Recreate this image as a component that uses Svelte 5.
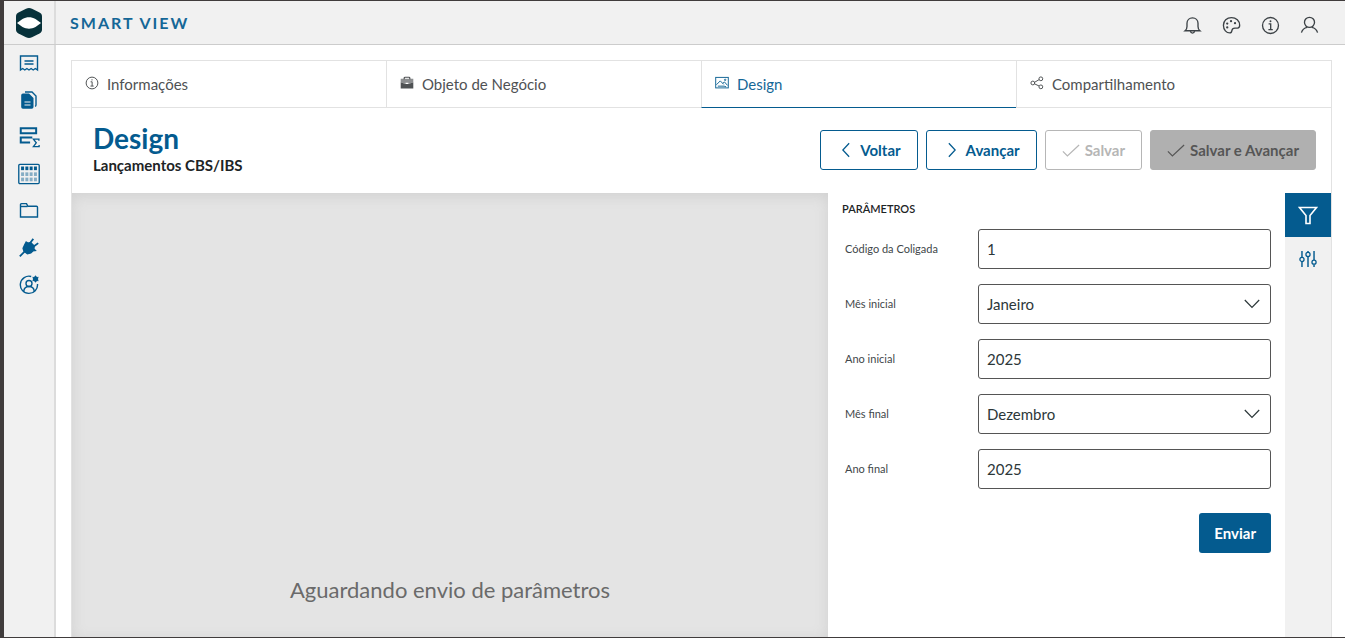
<script>
  const tabs = [
    { id: "info", label: "Informações" },
    { id: "object", label: "Objeto de Negócio" },
    { id: "design", label: "Design" },
    { id: "share", label: "Compartilhamento" },
  ];
  const menu = [
    { id: "report", label: "Relatórios" },
    { id: "files", label: "Documentos" },
    { id: "totals", label: "Totalizadores" },
    { id: "table", label: "Tabelas" },
    { id: "folder", label: "Pastas" },
    { id: "plug", label: "Conexões" },
    { id: "admin", label: "Administração" },
  ];
  const tools = [
    { id: "bell", label: "Notificações" },
    { id: "palette", label: "Tema" },
    { id: "about", label: "Sobre" },
    { id: "user", label: "Perfil" },
  ];
  const months = [
    "Janeiro", "Fevereiro", "Março", "Abril", "Maio", "Junho",
    "Julho", "Agosto", "Setembro", "Outubro", "Novembro", "Dezembro",
  ];

  let activeTab = $state("design");
  let panel = $state("filter");
  let params = $state([
    { id: "coligada", label: "Código da Coligada", value: "1" },
    { id: "mes-ini", label: "Mês inicial", value: "Janeiro", options: months },
    { id: "ano-ini", label: "Ano inicial", value: "2025" },
    { id: "mes-fim", label: "Mês final", value: "Dezembro", options: months },
    { id: "ano-fim", label: "Ano final", value: "2025" },
  ]);
</script>

{#snippet icon(name, size)}
  <svg width={size} height={size} viewBox="0 0 20 20" fill="none" stroke="currentColor" stroke-width="1.4" aria-hidden="true">
    {#if name === "report"}
      <path d="M1.5 3h17v14l-2.2-1.5-2.1 1.5-2.1-1.5-2.1 1.5-2.1-1.5-2.1 1.5-2.1-1.5-2.2 1.5z" />
      <path d="M5.5 8h9M5.5 11h9" />
    {:else if name === "files"}
      <path d="M6 2h7l4 4v9c0 .8-.4 1.2-1 1.4" />
      <path d="M4 3.5h6L14.5 8v9a1.8 1.8 0 0 1-1.8 1.8H4A1.8 1.8 0 0 1 2.2 17V5.3A1.8 1.8 0 0 1 4 3.5z" fill="currentColor" stroke="none" />
      <path d="M5.5 12h6M5.5 15h6" stroke="#f1f1f1" stroke-width="1.2" />
    {:else if name === "totals"}
      <path d="M2.5 2h14v4.5h-14z" stroke-width="1.8" />
      <path d="M13 10.5H2.5V15H11" stroke-width="1.8" />
      <path d="M19 13.5V12h-5l2.6 3.3L14 18.7h5.2v-1.5" stroke-width="1.2" />
    {:else if name === "table"}
      <rect x=".7" y="1.2" width="18.6" height="17.6" rx="1" stroke-width="1.2" />
      <g fill="currentColor" stroke="none">
        {#each [3.2, 8.5, 13.3] as y}
          {#each [2.8, 6.7, 10.6, 14.5] as x}
            <rect {x} {y} width="2.7" height="3.3" opacity={y < 5 ? 1 : 0.45} />
          {/each}
        {/each}
      </g>
    {:else if name === "folder"}
      <path d="M1.5 16V3.7c0-.7.4-1.1 1-1.100h5l1.4 2.7h8.600c.6 0 1 .4 1 1V16z" />
      <path d="M1.5 5.500h7" />
    {:else if name === "plug"}
      <path d="M7.2 4l1.7 1.100 2.700-.6 3.600 3.600-.3 2.800 1.500 1.600-2.600.4-2 2-3.400.9-3.400-2.600-.9-2.900 1.600-3.600z" fill="currentColor" />
      <path d="M.8 18.300l5-5M11.500 4.500l2.800-3.600M15 8.300l4.200-3.200" stroke-width="1.800" />
    {:else if name === "admin"}
      <path d="M12.200 1.500A8.600 8.600 0 1 0 18.500 9" />
      <circle cx="10" cy="8.500" r="3" />
      <path d="M4.700 16.400c.3-3 2.300-4.900 5.300-4.900s5 1.900 5.300 4.900" />
      <circle cx="16.500" cy="4" r="1.700" stroke-width="2" />
      <path d="M16.500.6v6.800M13.500 2.300l6 3.400M19.500 2.300l-6 3.400" stroke-width="1" />
    {:else if name === "bell"}
      <path d="M2.200 15.500h15.600c-1.500-1.200-2-2.600-2-4.500V7.700C15.800 4.300 13.300 2 10 2S4.200 4.300 4.200 7.700V11c0 1.900-.5 3.300-2 4.500z" />
      <path d="M7.800 16c.2 1.300 1 2 2.200 2s2-.7 2.200-2" />
    {:else if name === "palette"}
      <path d="M10 1.700c-5 0-8.500 3.500-8.500 8.100 0 4.800 3.200 8 6.700 8 1.600 0 2-1 2.200-2.400.2-1.800 1.300-2.700 3.200-2.700h2.700c1.500 0 2.300-1 2.300-2.900 0-4.600-3.700-8.100-8.600-8.100z" />
      <g fill="currentColor" stroke="none"><circle cx="5.500" cy="12" r="1.200" /><circle cx="5.500" cy="8" r="1.200" /><circle cx="9.500" cy="5.500" r="1.200" /><circle cx="13.700" cy="7.500" r="1.200" /></g>
    {:else if name === "about" || name === "info"}
      <circle cx="10" cy="10" r="8.400" />
      <path d="M8 8.300h2.200v6M7.800 14.400h4.600" />
      <circle cx="10" cy="5.500" r="1" fill="currentColor" stroke="none" />
    {:else if name === "user"}
      <circle cx="10" cy="6.700" r="5.300" />
      <path d="M1.500 17.500c1-3.200 3-5 6-5.600M18.500 17.500c-1-3.200-3-5-6-5.600" />
    {:else if name === "object"}
      <path d="M6 4.500V3c0-.8.500-1.200 1.200-1.200h5.600c.7 0 1.200.4 1.200 1.200v1.500" stroke-width="1.700" />
      <path d="M1 4h18v5l-7 2.500v-2H8v2L1 9z" fill="currentColor" stroke="none" opacity=".65" />
      <path d="M1 9l7 2.500h4L19 9v9H1z" fill="currentColor" stroke="none" />
    {:else if name === "design"}
      <rect x="1" y="2" width="18" height="15" />
      <path d="M2 12.500L7.500 7l5 5M11 10.500l2.500-2 4.500 5M4 14.500h9l3 1" />
      <circle cx="14.500" cy="5.500" r="1" />
    {:else if name === "share"}
      <circle cx="4" cy="10" r="2.700" /><circle cx="15.500" cy="4" r="2.700" /><circle cx="15.500" cy="15.500" r="2.700" />
      <path d="M6.500 9l6.500-3.800M6.500 11.200l6.500 3.100" />
    {:else if name === "left"}
      <path d="M13.500 2.500L6.500 10l7 7.500" />
    {:else if name === "right"}
      <path d="M6.500 2.500l7 7.500-7 7.500" />
    {:else if name === "check"}
      <path d="M1 11.500l5 5L19 4.500" />
    {:else if name === "filter"}
      <path d="M1.500 2.500h17L12 10.500v8H8v-8z" stroke-width="1.600" />
    {:else if name === "sliders"}
      <path d="M3.300 1v7M3.300 13v6M10 1v1.500M10 7.500V19M16.700 1v10M16.700 16v3" stroke-width="1.600" />
      <circle cx="3.300" cy="10.500" r="2.300" /><circle cx="10" cy="5" r="2.300" /><circle cx="16.700" cy="13.500" r="2.300" />
    {/if}
  </svg>
{/snippet}

<div class="app">
  <header class="topbar">
    <a class="logo" href="#home" aria-label="Início">
      <svg width="26" height="30" viewBox="0 0 26 30" aria-hidden="true">
        <path d="M13 0c1 0 2 .3 3 .8l7.500 3.800C25.200 5.500 26 6.700 26 8.500v13c0 1.800-.8 3-2.500 3.900L16 29.200c-2 1-4 1-6 0l-7.500-3.800C.8 24.500 0 23.300 0 21.500v-13c0-1.800.8-3 2.500-3.900L10 .8c1-.5 2-.8 3-.8z" fill="#07313a" />
        <path d="M1 15c2-1.300 3.500-2.700 5.500-4 4.300-2.300 8.700-2.300 13 0 2 1.300 3.500 2.700 5.500 4-2 1.300-3.500 2.700-5.500 4-4.300 2.300-8.700 2.300-13 0-2-1.300-3.500-2.700-5.500-4z" fill="#fff" />
      </svg>
    </a>
    <span class="brand">SMART VIEW</span>
    <div class="tools">
      {#each tools as t (t.id)}
        <button aria-label={t.label}>{@render icon(t.id, 19)}</button>
      {/each}
    </div>
  </header>

  <div class="body">
    <nav class="sidebar">
      {#each menu as m (m.id)}
        <a href="#{m.id}" aria-label={m.label}>{@render icon(m.id, m.id === "table" || m.id === "totals" ? 22 : 20)}</a>
      {/each}
    </nav>

    <main>
      <div class="tabs" role="tablist">
        {#each tabs as t (t.id)}
          <button class="tab" class:active={activeTab === t.id} role="tab" aria-selected={activeTab === t.id}
            onclick={() => (activeTab = t.id)}>
            {@render icon(t.id, 14)}<span>{t.label}</span>
          </button>
        {/each}
      </div>

      <div class="head">
        <div class="titles">
          <h1>Design</h1>
          <p>Lançamentos CBS/IBS</p>
        </div>
        <div class="actions">
          <button class="btn">{@render icon("left", 18)}Voltar</button>
          <button class="btn">{@render icon("right", 18)}Avançar</button>
          <button class="btn" disabled>{@render icon("check", 18)}Salvar</button>
          <button class="btn solid" disabled>{@render icon("check", 18)}Salvar e Avançar</button>
        </div>
      </div>

      <div class="workspace">
        <section class="viewer">Aguardando envio de parâmetros</section>

        <form class="params" onsubmit={(e) => e.preventDefault()}>
          <h2>PARÂMETROS</h2>
          {#each params as p (p.id)}
            <div class="field">
              <label for={p.id}>{p.label}</label>
              {#if p.options}
                <div class="select">
                  <select id={p.id} bind:value={p.value}>
                    {#each p.options as o (o)}<option>{o}</option>{/each}
                  </select>
                  <svg width="16" height="10" viewBox="0 0 16 10" fill="none" stroke="currentColor" stroke-width="1.2" aria-hidden="true">
                    <path d="M.8 1L8 8.500 15.200 1" />
                  </svg>
                </div>
              {:else}
                <input id={p.id} type="text" bind:value={p.value} />
              {/if}
            </div>
          {/each}
          <button class="send">Enviar</button>
        </form>

        <div class="rail">
          <button class:on={panel === "filter"} aria-label="Parâmetros" onclick={() => (panel = "filter")}>{@render icon("filter", 20)}</button>
          <button class:on={panel === "sliders"} aria-label="Configurações" onclick={() => (panel = "sliders")}>{@render icon("sliders", 18)}</button>
        </div>
      </div>
    </main>
  </div>
</div>

<style>
  :global(body) { margin: 0; background: #fff; }
  .app {
    --blue: #045b8f;
    --line: #e2e2e2;
    --bar: #f1f1f1;
    box-sizing: border-box; height: 100vh; overflow: hidden;
    display: flex; flex-direction: column;
    border: solid #403c3c; border-width: 1px 0 1px 4px;
    font: 15px/24px Lato, sans-serif; color: #2c3739;
  }
  .app * { box-sizing: border-box; }
  button, input, select { font: inherit; color: inherit; margin: 0; }
  button { background: none; border: 0; padding: 0; cursor: pointer; }
  svg { display: block; flex: none; }

  .topbar {
    display: flex; flex: none; height: 44px;
    background: var(--bar); border-bottom: 1px solid #ccc;
  }
  .logo {
    width: 52px; display: grid; place-items: center;
    border-right: 2px solid #dcdcdc;
  }
  .brand {
    padding: 10px 14px; font-size: 16px; font-weight: 700; letter-spacing: 2px; color: #156797;
  }
  .tools { display: flex; align-items: center; gap: 20px; margin-left: auto; padding: 6px 26px 0 0; color: #3c4246; }

  .body { flex: 1; display: flex; min-height: 0; }
  .sidebar {
    flex: none; width: 52px;
    display: flex; flex-direction: column; gap: 1px;
    background: var(--bar); border-right: 2px solid #dcdcdc;
  }
  .sidebar a { height: 36px; display: grid; place-items: center; color: var(--blue); }

  main {
    flex: 1; min-width: 0; margin: 15px 13px 0 15px;
    display: flex; flex-direction: column;
    border: solid var(--line); border-width: 1px 1px 0;
  }
  .tabs { flex: none; display: flex; height: 47px; }
  .tab {
    flex: 1; display: flex; gap: 8px; padding: 11px 13px;
    border-bottom: 1px solid var(--line); color: #4f5254;
  }
  .tab + .tab { border-left: 1px solid var(--line); }
  .tab :global(svg) { margin-top: 4px; }
  .tab.active { color: #156797; border-bottom-color: var(--blue); }

  .head {
    flex: none; height: 85px; padding: 13px 15px 0 21px;
    display: flex; justify-content: space-between;
  }
  h1 { margin: 0; font: 700 28px/34px Lato, sans-serif; color: var(--blue); }
  .titles p { margin: 0; font-weight: 700; line-height: 20px; color: #1d2426; }
  .actions { display: flex; gap: 8px; padding-top: 9px; }
  .btn {
    height: 40px; padding: 0 16px; display: flex; align-items: center; gap: 5px;
    border: 1px solid var(--blue); border-radius: 3px;
    font-weight: 700; color: var(--blue);
  }
  .btn:disabled { border-color: #b6b6b6; color: #b6b6b6; cursor: default; }
  .btn.solid { background: #b0b0b0; border-color: #b0b0b0; color: #565656; }

  .workspace { flex: 1; min-height: 0; display: flex; overflow: hidden; }
  .viewer {
    flex: 1; padding-top: 382px; text-align: center;
    font-size: 22px; line-height: 30px; color: #6a6a6a;
    background: #e4e4e4; box-shadow: inset 0 3px 14px #d0d0d0;
  }
  .params {
    flex: none; width: 457px; padding: 6px 14px 0;
    display: flex; flex-direction: column;
  }
  h2 { margin: 0 0 10px; font: 600 11px/20px Lato, sans-serif; color: #1d2426; }
  .field { display: grid; grid-template-columns: 133px 1fr; align-items: center; height: 40px; margin: 0 0 15px 3px; }
  .field label { font-size: 11px; line-height: 16px; color: #3f474a; }
  .field input, .field select {
    width: 100%; height: 40px; padding: 0 8px; background: #fff;
    border: 1px solid #555; border-radius: 3px;
  }
  .select { position: relative; }
  .field select { display: block; appearance: none; }
  .select svg { position: absolute; right: 11px; top: 15px; pointer-events: none; }
  .send {
    align-self: flex-end; height: 40px; padding: 0 15px; margin-top: 9px;
    border-radius: 3px; background: var(--blue); color: #fff; font-weight: 700;
  }

  .rail { flex: none; width: 46px; background: var(--bar); }
  .rail button { width: 100%; height: 44px; display: grid; place-items: center; color: var(--blue); }
  .rail .on { background: var(--blue); color: #fff; }
</style>
